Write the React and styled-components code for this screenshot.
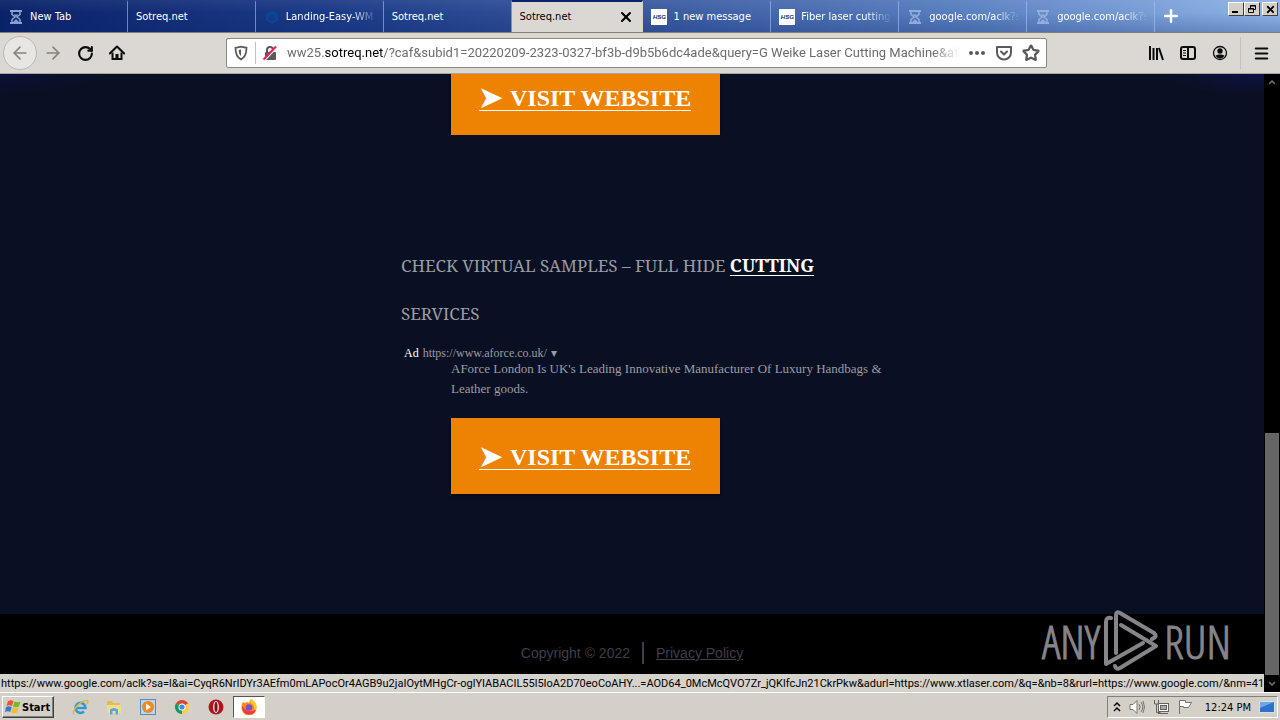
import React from "react";
import styled, { createGlobalStyle } from "styled-components";
import { ArrowLeft, ArrowRight, RotateCw, Plus, X, Star, Menu } from "lucide-react";

const ui = `"DejaVu Sans Condensed", "DejaVu Sans", sans-serif`;
const serif = `"Liberation Serif", serif`;

const Global = createGlobalStyle`
  * { box-sizing: border-box; }
  body { margin: 0; font-family: ${ui}; font-size: 11px; background: #0a1024; }
  button { font: inherit; color: inherit; border: 0; padding: 0; background: none; }
  svg { display: block; flex: none; }
`;

const Screen = styled.div`
  height: 100vh;
  display: flex;
  flex-direction: column;
  overflow: hidden;
`;

const TabStrip = styled.header`
  display: flex;
  height: 33px;
  flex: none;
  border-bottom: 1px solid #848078;
  background:
    linear-gradient(180deg, rgba(255,255,255,0.06), rgba(10,36,120,0) 40%, rgba(10,36,106,0.25)),
    linear-gradient(90deg, #0a2268, #1b3a86 25%, #39599f 50%, #587fc0 75%, #8fb4e6);
`;
const Tabs = styled.div`
  display: flex;
  flex: 1;
  min-width: 0;
`;
const Tab = styled.button`
  flex: 1 1 0;
  min-width: 0;
  display: flex;
  align-items: center;
  gap: 6px;
  padding: 0 ${(p) => (p.$active ? 8 : 4)}px 0 8px;
  text-align: left;
  border-right: 1px solid ${(p) => (p.$active ? "#d8d4ce" : "rgba(170,195,240,0.6)")};
  color: ${(p) => (p.$active ? "#000" : "#fff")};
  background: ${(p) => (p.$active ? "#dbd8d3" : "transparent")};
  border-top: 2px solid ${(p) => (p.$active ? "#0a246a" : "transparent")};
`;
const TabTitle = styled.span`
  flex: 1;
  overflow: hidden;
  white-space: nowrap;
  line-height: 16px;
  mask-image: ${(p) => (p.$fade ? "linear-gradient(90deg, #000 70%, transparent 98%)" : "none")};
`;
const HsgMark = styled.span`
  width: 16px;
  height: 16px;
  background: #fff;
  color: #24245c;
  font: italic bold 6px/16px "Liberation Sans", sans-serif;
  text-align: center;
`;
const StripEnd = styled.div`
  width: 125px;
  display: flex;
  justify-content: space-between;
  padding: 0 2px 0 6px;
`;
const NewTab = styled.button`
  color: #fff;
`;
const WindowButtons = styled.div`
  display: flex;
  padding-top: 2px;
`;
const WindowButton = styled.button`
  width: 16px;
  height: 14px;
  background: #d4d0c8;
  border: 1px solid;
  border-color: #fff #404040 #404040 #fff;
  display: grid;
  place-items: center;
  &:last-child { margin-left: 2px; }
`;

const Toolbar = styled.nav`
  height: 41px;
  flex: none;
  display: flex;
  align-items: center;
  background: #dbd8d3;
  border-bottom: 1px solid #a8a5a0;
  padding-right: 3px;
`;
const NavGroup = styled.div`
  flex: 1 1 0;
  display: flex;
  align-items: center;
`;
const NavButton = styled.button`
  width: 32px;
  height: 34px;
  display: grid;
  place-items: center;
  color: ${(p) => (p.$dim ? "#85827e" : "#0c0c0d")};
`;
const BackButton = styled(NavButton)`
  width: 34px;
  margin-left: 3px;
  border-radius: 50%;
  background: #e8e6e2;
  border: 1px solid #bbb8b2;
`;
const AddressBar = styled.div`
  flex: 0 1 821px;
  min-width: 0;
  height: 30px;
  display: flex;
  align-items: center;
  gap: 9px;
  margin-right: 4px;
  padding: 0 6px;
  background: #fff;
  border: 1px solid #8c8984;
  border-radius: 2px;
  color: #5a5a5c;
`;
const SiteInfo = styled.div`
  display: flex;
  align-items: center;
  gap: 6px;
`;
const Divider = styled.span`
  width: 1px;
  height: 22px;
  background: #c4c1bc;
`;
const MenuDivider = styled(Divider)`
  height: 32px;
  margin: 0 4px;
`;
const Address = styled.div`
  flex: 1;
  min-width: 0;
  overflow: hidden;
  white-space: nowrap;
  font-family: Roboto, sans-serif;
  font-size: 13px;
  line-height: 20px;
  color: #6c6c6e;
  mask-image: linear-gradient(90deg, #000 96%, transparent);
  b { font-weight: 400; color: #000; }
`;
const ToolGroup = styled(NavGroup)`
  justify-content: flex-end;
`;

const Viewport = styled.div`
  flex: 1;
  min-height: 0;
  display: flex;
  position: relative;
`;
const Page = styled.main`
  flex: 1;
  min-width: 0;
  display: flex;
  flex-direction: column;
  overflow: hidden;
  background: radial-gradient(ellipse 100px 20px at 100% 0, #0d1244, transparent),
    radial-gradient(ellipse 100px 18px at 0 0, #0b1038, transparent), #0a1024;
`;
const Results = styled.div`
  flex: none;
  width: 490px;
  margin-left: calc(50% - 231px);
  padding-bottom: 120px;
  font-family: ${serif};
  color: #9b9ca2;
`;
const Visit = styled.a`
  display: flex;
  align-items: center;
  flex: none;
  width: 269px;
  height: 76px;
  margin-left: 50px;
  padding: 2px 0 0 28px;
  background: #ee8202;
  color: #fff;
  font-size: 24px;
  font-weight: 700;
  text-decoration: none;
  white-space: nowrap;
  box-shadow: 0 1px 3px rgba(0,0,0,0.6);
`;
const VisitLabel = styled.span`
  display: flex;
  align-items: center;
  gap: 8px;
  line-height: 24px;
  border-bottom: 1px solid #fff;
`;
const VisitArrow = styled.span`
  font-size: 28px;
`;
const Clipped = styled.div`
  height: 61px;
  overflow: hidden;
  display: flex;
  align-items: flex-end;
`;
const Heading = styled.h2`
  margin: 107px 0 0;
  font-family: "Noto Serif", serif;
  font-size: 17px;
  line-height: 48px;
  font-weight: 400;
  a { color: #fff; font-size: 18px; font-weight: 700; line-height: 24px; text-underline-offset: 3px; }
`;
const Source = styled.div`
  display: flex;
  gap: 4px;
  padding-left: 3px;
  margin-top: 9px;
  font-size: 12px;
  line-height: 12px;
  b { font-weight: 400; color: #fff; }
`;
const Summary = styled.p`
  margin: 0 0 19px 50px;
  font-size: 13px;
  line-height: 20px;
`;
const Footer = styled.footer`
  flex: 1;
  background: #000;
  display: flex;
  justify-content: center;
  align-items: flex-start;
  gap: 12px;
  padding-top: 28px;
  font: 14px/22px "Liberation Sans", sans-serif;
  color: #3f3e4b;
  a { color: inherit; }
`;
const FooterRule = styled.span`
  width: 2px;
  height: 22px;
  background: #3f3e4b;
`;
const ScrollTrack = styled.div`
  width: 16px;
  background: #000;
  display: flex;
  flex-direction: column;
  align-items: center;
  padding: 4px 0;
  color: #77777a;
`;
const ScrollThumb = styled.div`
  width: 14px;
  height: 242px;
  margin: auto 0 5px;
  background: #666;
`;
const Watermark = styled.div`
  position: absolute;
  right: 49px;
  bottom: 20px;
  display: flex;
  align-items: center;
  gap: 4px;
  color: #858589;
  font: 46px/62px "Open Sans Condensed Light", "Roboto Condensed", sans-serif;
  -webkit-text-stroke: 1px #858589;
`;
const LinkStatus = styled.div`
  position: absolute;
  left: 0;
  right: 16px;
  bottom: 0;
  padding: 2px 0 0 1px;
  background: #d6d2cc;
  color: #000;
  font-family: Roboto, sans-serif;
  font-size: 11px;
  line-height: 16px;
  white-space: nowrap;
  overflow: hidden;
`;

const Taskbar = styled.footer`
  flex: none;
  height: 28px;
  display: flex;
  align-items: center;
  background: #d4d0c8;
  border-top: 1px solid #fff;
  padding: 1px 2px 0;
`;
const Start = styled.button`
  width: 52px;
  height: 22px;
  display: flex;
  align-items: center;
  gap: 1px;
  padding-left: 2px;
  font-weight: 700;
  border: 1px solid;
  border-color: #fff #404040 #404040 #fff;
  box-shadow: inset -1px -1px #808080;
`;
const Launchers = styled.div`
  display: flex;
  flex: 1;
  padding-left: 9px;
`;
const Launcher = styled.button`
  width: ${(p) => (p.$open ? 32 : 34)}px;
  height: 22px;
  display: grid;
  place-items: center;
  background: ${(p) => (p.$open ? "#fff" : "none")};
  border: 1px solid;
  border-color: ${(p) => (p.$open ? "#555 #fff #fff #555" : "transparent")};
`;
const Tray = styled.div`
  height: 22px;
  display: flex;
  align-items: center;
  gap: 8px;
  padding: 0 2px 0 5px;
  border: 1px solid;
  border-color: #808080 #fff #fff #808080;
`;
const Clock = styled.time`
  margin-left: 4px;
`;

const line = { fill: "none", stroke: "currentColor" };

const HourIcon = () => (
  <svg width="16" height="16" viewBox="0 0 16 16" fill="none" stroke="#9fb5e0" opacity=".85">
    <path d="M2 2h12M2 14h12" strokeWidth="2" />
    <path d="M4 3v2.500L7 8l-3 2.500V13M12 3v2.500L9 8l3 2.500V13" strokeWidth="1.600" />
    <path d="M5.500 5.500h5L8 8zM5 13l3-3 3 3z" fill="#9fb5e0" stroke="none" />
  </svg>
);
const DropIcon = () => (
  <svg width="16" height="16" viewBox="0 0 16 16">
    <path d="M8 1l6 4v6l-6 4-6-4V5z" fill="#094796" />
    <path d="M8 4l3 5a3 3 0 1 1-6 0z" fill="#163a86" />
  </svg>
);
const HomeIcon = () => (
  <svg width="16" height="16" viewBox="0 0 16 16" {...line} strokeWidth="2">
    <path d="M.8 8.500L8 1.500l7.200 7" strokeLinecap="round" strokeLinejoin="round" />
    <path d="M3.500 7.500V14h9V7.500" />
    <path d="M6.500 14V9h3v5z" fill="currentColor" stroke="none" />
  </svg>
);
const Shield = () => (
  <svg width="16" height="16" viewBox="0 0 16 16" {...line} strokeWidth="1.800">
    <path d="M2.500 2.800L8 1.600l5.500 1.200C13.500 9 12 12.500 8 14.400 4 12.500 2.500 9 2.500 2.800z" />
    <path d="M8 4.500v6.500c-1.500-1.200-2.200-3-2.300-6z" fill="currentColor" stroke="none" />
  </svg>
);
const Unsafe = () => (
  <svg width="16" height="16" viewBox="0 0 16 16">
    <path d="M5 7V5a3 3 0 0 1 6 0v2" fill="none" stroke="#5a5a5c" strokeWidth="2" />
    <rect x="3" y="7" width="11" height="8" rx="1" fill="#5a5a5c" />
    <path d="M2.500 15.500L15 2.500" stroke="#fff" strokeWidth="1.500" />
    <path d="M1.500 14.500L14 1.500" stroke="#e22850" strokeWidth="2.200" />
  </svg>
);
const Dots = () => (
  <svg width="18" height="16" viewBox="0 0 18 16" fill="currentColor">
    <circle cx="3" cy="8" r="2" /><circle cx="9" cy="8" r="2" /><circle cx="15" cy="8" r="2" />
  </svg>
);
const Pocket = () => (
  <svg width="18" height="16" viewBox="-1 0 18 16" {...line} strokeWidth="2" strokeLinecap="round" strokeLinejoin="round">
    <path d="M1 2h14v5.500a7 7 0 0 1-14 0z" /><path d="M5 6.500l3 3 3-3" />
  </svg>
);
const Library = () => (
  <svg width="16" height="16" viewBox="0 0 16 16" {...line} strokeWidth="2">
    <path d="M2 1v14M5.500 3v12M9 3v12M11 3l4 12" />
  </svg>
);
const Sidebar = () => (
  <svg width="16" height="16" viewBox="0 0 16 16" {...line} strokeWidth="2">
    <rect x="1" y="2" width="14" height="12" rx="2" /><path d="M8 2v12" />
    <path d="M3 5.500h3M3 8h3M3 10.500h3" strokeWidth="1" />
  </svg>
);
const Account = () => (
  <svg width="16" height="16" viewBox="0 0 16 16">
    <circle cx="8" cy="8" r="6.500" {...line} strokeWidth="1.300" />
    <circle cx="8" cy="6" r="2.700" fill="currentColor" />
    <path d="M3.500 10.500c2-1.500 7-1.500 9 0-1 2-2.500 3-4.500 3s-3.500-1-4.500-3z" fill="currentColor" />
  </svg>
);
const Chevron = ({ up }) => (
  <svg width="8" height="8" viewBox="0 0 8 8" {...line} strokeWidth="1.500">
    <path d={up ? "M1 6l3-3 3 3" : "M1 2l3 3 3-3"} />
  </svg>
);
const PlayMark = () => (
  <svg width="56" height="62" viewBox="0 0 56 62" {...line} strokeWidth="4" strokeLinejoin="round" strokeLinecap="round">
    <path d="M7 8Q2 7 2 12V54L39 33" />
    <path d="M12 43V5q0-4 4-2L50 23q4 4-2 6" />
    <path d="M17 15L52 36 16 58q-4 2-5-2" />
  </svg>
);
const WinLogo = () => (
  <svg width="16" height="16" viewBox="0 0 16 16">
    <path d="M3 2q3-1.500 5.500 0L7 7Q4 5.500 1.500 7z" fill="#e8582b" />
    <path d="M9.500 2.500q3 1.500 6 0L14 7.500q-3 1.500-6 0z" fill="#77b82b" />
    <path d="M1 8q3-1.500 5.700 0L5.300 13Q3 11.500 0 13z" fill="#3a78d0" />
    <path d="M7.700 8.500q3 1.500 6 0l-1.500 5q-3 1.500-6 0z" fill="#f5bd25" />
  </svg>
);
const IeIcon = () => (
  <svg width="17" height="17" viewBox="0 0 17 17" fill="none">
    <path d="M4 9h9.500a5 5 0 1 0-1.500 3.500" stroke="#2f9ad8" strokeWidth="2.600" />
    <path d="M2 15.500C-1 12 9 1 15 1.500c2 1 0 3-1 4" stroke="#e3b93a" strokeWidth="1.500" />
  </svg>
);
const FolderIcon = () => (
  <svg width="16" height="16" viewBox="0 0 16 16">
    <path d="M1 2h5l1 2h7v9H1z" fill="#e3bd52" /><path d="M1 6h14v8H1z" fill="#f3dc8c" />
    <path d="M4 15.500v-5q4-3 8 0v5H9.500V12h-3v3.500z" fill="#5aa6da" />
  </svg>
);
const MediaIcon = () => (
  <svg width="16" height="16" viewBox="0 0 16 16">
    <rect x=".5" y=".5" width="15" height="15" fill="#b6d7f2" stroke="#528cc4" />
    <circle cx="8" cy="8" r="6" fill="#f08a1c" /><path d="M6 4.500l5 3.500-5 3.500z" fill="#fff" />
  </svg>
);
const ChromeIcon = () => (
  <svg width="16" height="16" viewBox="0 0 16 16">
    <path d="M8 8L1.900 4.500a7 7 0 0 1 12.200 0z" fill="#db4437" />
    <path d="M8 8l6.100-3.500A7 7 0 0 1 8 15z" fill="#ffcd40" />
    <path d="M8 8v7A7 7 0 0 1 1.900 4.500z" fill="#0f9d58" />
    <circle cx="8" cy="8" r="3.500" fill="#fff" /><circle cx="8" cy="8" r="2.600" fill="#4285f4" />
  </svg>
);
const OperaIcon = () => (
  <svg width="16" height="16" viewBox="0 0 16 16">
    <circle cx="8" cy="8" r="7.500" fill="#b3121c" /><ellipse cx="8" cy="8" rx="3" ry="6" fill="#e9dada" />
    <ellipse cx="8" cy="8" rx="1.500" ry="5" fill="#7c1015" />
  </svg>
);
const FirefoxIcon = () => (
  <svg width="16" height="16" viewBox="0 0 16 16">
    <path d="M2 3l2 1 2-1 2 1 2-4c3 2 6 5 5.500 9a7.500 7.500 0 0 1-15 0C.5 6 1 4 2 3z" fill="#ff8a16" />
    <path d="M10 0c3 2 6 5 5.500 9a7 7 0 0 1-2 4c1-5-1-7-4-9z" fill="#ffcb2e" />
    <path d="M1 7c0 5 3 8.500 7 8.500s6-2 7-5c-5 3-10 2-14-3.500z" fill="#f0384c" />
    <circle cx="8" cy="8.500" r="3.300" fill="#7850c8" />
  </svg>
);
const Speaker = () => (
  <svg width="16" height="16" viewBox="0 0 16 16" fill="none" stroke="#77746f">
    <path d="M1 5.500h3l4-4v13l-4-4H1z" fill="#fff" /><path d="M10 5q2 3 0 6M12 3q3.500 5 0 10M14 2q3 6 0 12" />
  </svg>
);
const Network = () => (
  <svg width="16" height="16" viewBox="0 0 16 16" fill="#fff" stroke="#66635f">
    <rect x="5.500" y="4.500" width="10" height="8" /><rect x="7.500" y="6.500" width="6" height="4" fill="#aaa" />
    <path d="M5 14.500h10" /><path d="M1.500 1v4h4V1M3.500 5v8.500h4" fill="none" />
  </svg>
);
const Flag = () => (
  <svg width="16" height="16" viewBox="0 0 16 16" fill="#fff" stroke="#77746f">
    <path d="M2.500 15V1.500h6v2h6l-3 5h-5v-1h-4" />
  </svg>
);
const Desktop = () => (
  <svg width="16" height="14" viewBox="0 0 16 14">
    <rect x=".5" y="1.500" width="15" height="11" fill="#2f72cc" stroke="#cfe1f4" /><path d="M1 2h14L1 8z" fill="#6ca7e6" />
  </svg>
);

const tabs = [
  { title: "New Tab", icon: <HourIcon /> },
  { title: "Sotreq.net" },
  { title: "Landing-Easy-WM", icon: <DropIcon />, fade: true },
  { title: "Sotreq.net" },
  { title: "Sotreq.net", active: true },
  { title: "1 new message", icon: <HsgMark>HSG</HsgMark> },
  { title: "Fiber laser cutting", icon: <HsgMark>HSG</HsgMark>, fade: true },
  { title: "google.com/aclk?s", icon: <HourIcon />, fade: true },
  { title: "google.com/aclk?s", icon: <HourIcon />, fade: true },
];

const VisitWebsite = () => (
  <Visit href="#visit">
    <VisitLabel><VisitArrow>➤</VisitArrow>VISIT WEBSITE</VisitLabel>
  </Visit>
);

export default function App() {
  return (
    <Screen>
      <Global />
      <TabStrip>
        <Tabs>
          {tabs.map((t, i) => (
            <Tab key={i} $active={t.active}>
              {t.icon}
              <TabTitle $fade={t.fade}>{t.title}</TabTitle>
              {t.active && <X size={16} strokeWidth={3} />}
            </Tab>
          ))}
        </Tabs>
        <StripEnd>
          <NewTab aria-label="New tab"><Plus size={20} strokeWidth={3} /></NewTab>
          <WindowButtons>
            <WindowButton aria-label="Minimize">
              <svg width="10" height="8" viewBox="0 0 10 8"><path d="M1 7h6" stroke="#000" strokeWidth="2" /></svg>
            </WindowButton>
            <WindowButton aria-label="Restore">
              <svg width="10" height="10" viewBox="0 0 10 10" {...line}><path d="M3.500 4V1.500h5v4H6M3 2h6M1.500 4.500h5v4h-5zM1 5h6" /></svg>
            </WindowButton>
            <WindowButton aria-label="Close"><X size={11} strokeWidth={4} /></WindowButton>
          </WindowButtons>
        </StripEnd>
      </TabStrip>
      <Toolbar>
        <NavGroup>
          <BackButton $dim aria-label="Back"><ArrowLeft size={20} /></BackButton>
          <NavButton $dim aria-label="Forward"><ArrowRight size={20} /></NavButton>
          <NavButton aria-label="Reload"><RotateCw size={17} strokeWidth={3} /></NavButton>
          <NavButton aria-label="Home"><HomeIcon /></NavButton>
        </NavGroup>
        <AddressBar>
          <SiteInfo><Shield /><Divider /><Unsafe /></SiteInfo>
          <Address>
            ww25.<b>sotreq.net</b>/?caf&amp;subid1=20220209-2323-0327-bf3b-d9b5b6dc4ade&amp;query=G Weike Laser Cutting Machine&amp;afd
          </Address>
          <Dots /><Pocket /><Star size={18} strokeWidth={3} />
        </AddressBar>
        <ToolGroup>
          <NavButton aria-label="Library"><Library /></NavButton>
          <NavButton aria-label="Sidebar"><Sidebar /></NavButton>
          <NavButton aria-label="Account"><Account /></NavButton>
          <MenuDivider />
          <NavButton aria-label="Menu"><Menu size={17} strokeWidth={3} /></NavButton>
        </ToolGroup>
      </Toolbar>
      <Viewport>
        <Page>
          <Results>
            <Clipped><VisitWebsite /></Clipped>
            <Heading>CHECK VIRTUAL SAMPLES – FULL HIDE <a href="#cutting">CUTTING</a><br />SERVICES</Heading>
            <Source><b>Ad</b><span>https://www.aforce.co.uk/</span><span>▾</span></Source>
            <Summary>
              AForce London Is UK's Leading Innovative Manufacturer Of Luxury Handbags &amp;<br />Leather goods.
            </Summary>
            <VisitWebsite />
          </Results>
          <Footer>
            <span>Copyright © 2022</span><FooterRule /><a href="#privacy">Privacy Policy</a>
          </Footer>
        </Page>
        <ScrollTrack><Chevron up /><ScrollThumb /><Chevron /></ScrollTrack>
        <Watermark><span>ANY</span><PlayMark /><span>RUN</span></Watermark>
        <LinkStatus>
          https://www.google.com/aclk?sa=l&amp;ai=CyqR6NrIDYr3AEfm0mLAPocOr4AGB9u2jaIOytMHgCr-oglYIABACIL55l5IoA2D70eoCoAHY...=AOD64_0McMcQVO7Zr_jQKlfcJn21CkrPkw&amp;adurl=https://www.xtlaser.com/&amp;q=&amp;nb=8&amp;rurl=https://www.google.com/&amp;nm=41
        </LinkStatus>
      </Viewport>
      <Taskbar>
        <Start><WinLogo />Start</Start>
        <Launchers>
          <Launcher aria-label="Internet Explorer"><IeIcon /></Launcher>
          <Launcher aria-label="Explorer"><FolderIcon /></Launcher>
          <Launcher aria-label="Media Player"><MediaIcon /></Launcher>
          <Launcher aria-label="Chrome"><ChromeIcon /></Launcher>
          <Launcher aria-label="Opera"><OperaIcon /></Launcher>
          <Launcher $open aria-label="Firefox"><FirefoxIcon /></Launcher>
        </Launchers>
        <Tray>
          <svg width="8" height="12" viewBox="0 0 8 12" fill="none" stroke="#000" strokeWidth="1.500"><path d="M1 5l3-3 3 3M1 10l3-3 3 3" /></svg>
          <Speaker /><Network /><Flag />
          <Clock>12:24 PM</Clock>
          <Desktop />
        </Tray>
      </Taskbar>
    </Screen>
  );
}
